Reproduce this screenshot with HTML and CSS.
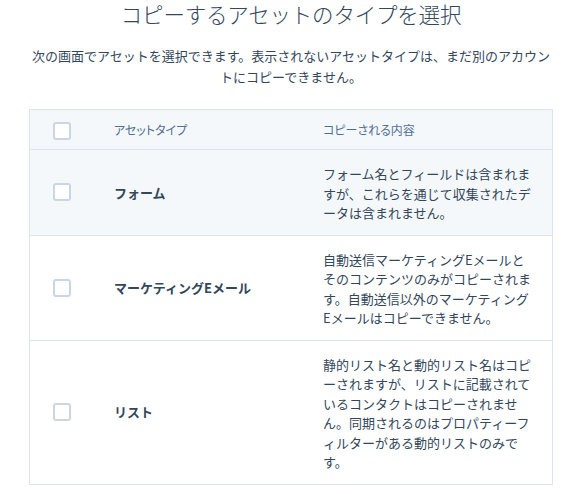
FILE: index.html
```html
<!DOCTYPE html>
<html lang="ja">
<head>
<meta charset="utf-8">
<title>コピーするアセットのタイプを選択</title>
<link rel="stylesheet" href="styles.css">
</head>
<body>
<main class="page">
  <h1 class="title">コピーするアセットのタイプを選択</h1>
  <p class="lead">次の画面でアセットを選択できます。表示されないアセットタイプは、まだ別のアカウントにコピーできません。</p>

  <div class="table" role="table">
    <div class="row row-head" role="row">
      <div class="cell cell-check"><span class="checkbox"></span></div>
      <div class="cell cell-type">アセットタイプ</div>
      <div class="cell cell-desc">コピーされる内容</div>
    </div>
    <div class="row row-hover" role="row">
      <div class="cell cell-check"><span class="checkbox"></span></div>
      <div class="cell cell-type label">フォーム</div>
      <div class="cell cell-desc">フォーム名とフィールドは含まれますが、これらを通じて収集されたデータは含まれません。</div>
    </div>
    <div class="row" role="row">
      <div class="cell cell-check"><span class="checkbox"></span></div>
      <div class="cell cell-type label">マーケティングEメール</div>
      <div class="cell cell-desc">自動送信マーケティングEメールとそのコンテンツのみがコピーされます。自動送信以外のマーケティングEメールはコピーできません。</div>
    </div>
    <div class="row" role="row">
      <div class="cell cell-check"><span class="checkbox"></span></div>
      <div class="cell cell-type label">リスト</div>
      <div class="cell cell-desc">静的リスト名と動的リスト名はコピーされますが、リストに記載されているコンタクトはコピーされません。同期されるのはプロパティーフ<wbr>ィルターがある動的リストのみです。</div>
    </div>
  </div>
</main>
</body>
</html>
```

FILE: styles.css
```css
* {
  box-sizing: border-box;
}

html, body {
  margin: 0;
  background: #ffffff;
}

body {
  font-family: "Noto Sans CJK JP", "Noto Sans", sans-serif;
  color: #33475b;
  line-break: loose;
}

.page {
  padding: 0 28px 0 29px;
}

.title {
  margin: 0;
  font-size: 21.5px;
  font-weight: 300;
  line-height: 28px;
  text-align: center;
  letter-spacing: -0.2px;
}

.lead {
  margin: 17px 0 0;
  font-size: 13px;
  line-height: 21px;
  text-align: center;
}

.table {
  margin-top: 22px;
  border: 1px solid #dfe3eb;
  border-bottom-width: 0;
}

.row {
  display: grid;
  grid-template-columns: 84px 209px 1fr;
  border-bottom: 1px solid #dfe3eb;
  background: #ffffff;
}

.row-head,
.row-hover {
  background: #f5f8fa;
}

.cell {
  display: flex;
  align-items: center;
}

.cell-check {
  padding-left: 23px;
}

.checkbox {
  display: block;
  width: 18px;
  height: 18px;
  border: 2px solid #cbd6e2;
  border-radius: 3px;
  background: #ffffff;
}

/* header row: small muted captions, proportional kana */
.row-head .cell {
  height: 39px;
  font-size: 12px;
  line-height: 19px;
  color: #516f90;
  font-feature-settings: "palt";
}

.row-head .cell-check {
  padding-top: 2px;
}

.label {
  font-size: 13px;
  font-weight: 700;
  line-height: 19.5px;
}

.cell-desc {
  padding: 14px 19px 12px 0;
  font-size: 13px;
  line-height: 19.5px;
}

.row-head .cell-desc {
  padding: 0;
}
```
